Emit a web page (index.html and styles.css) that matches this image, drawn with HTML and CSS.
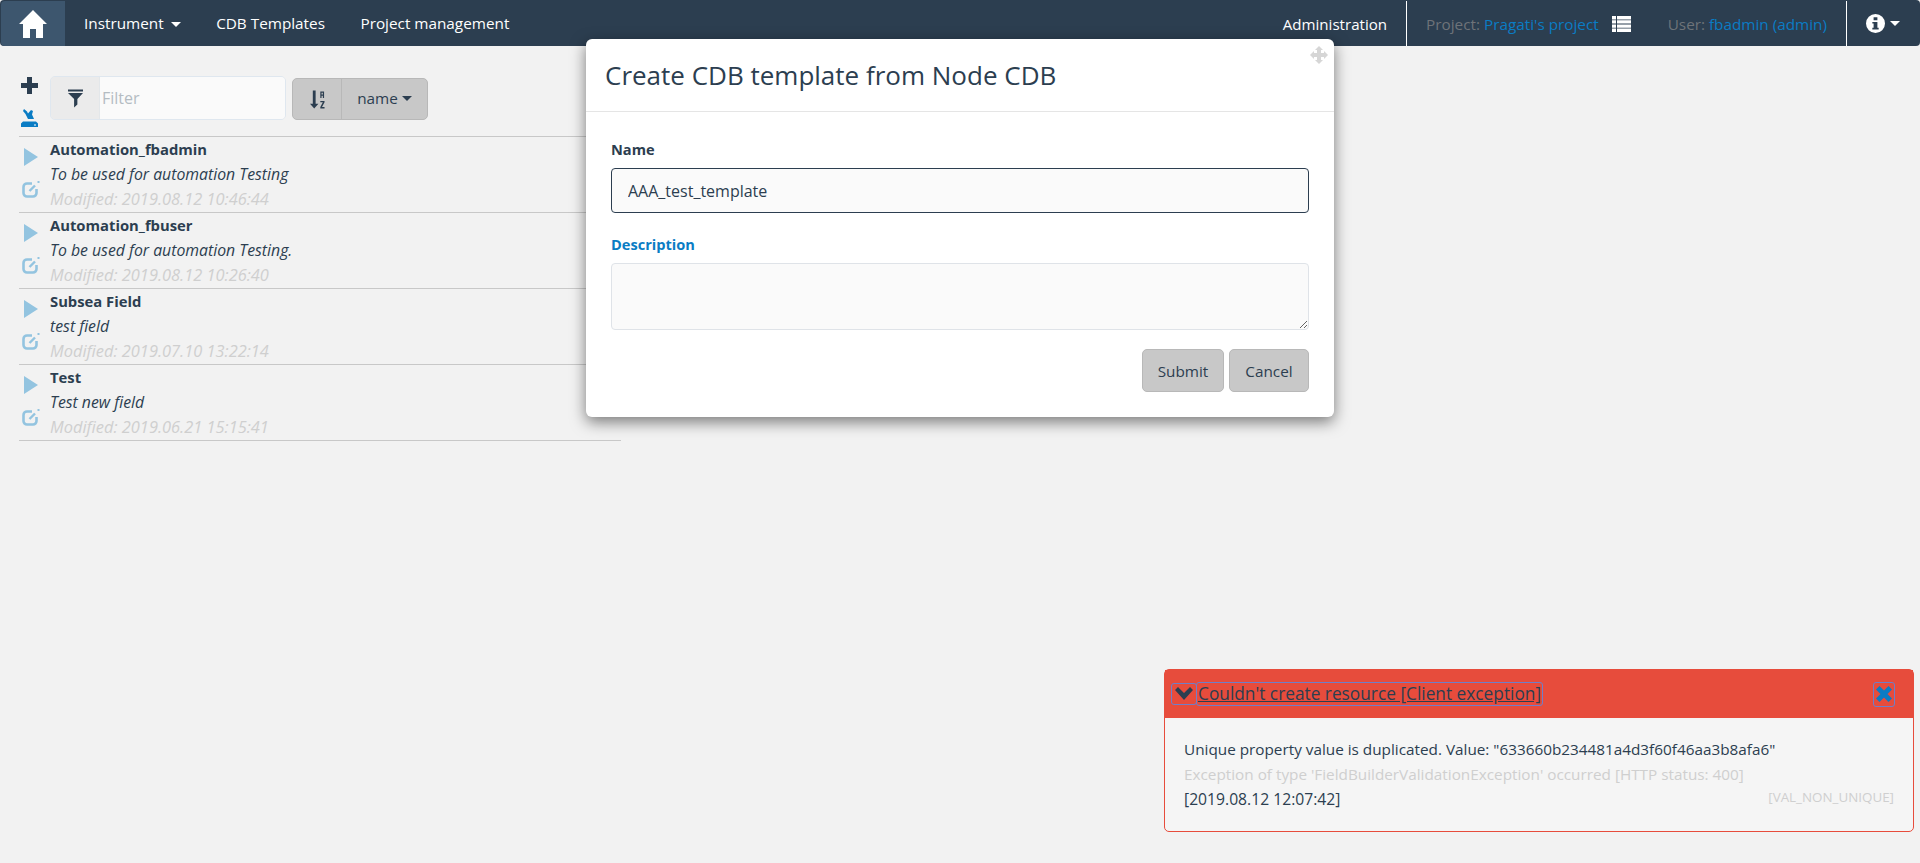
FILE: index.html
```html
<!DOCTYPE html>
<html lang="en">
<head>
<meta charset="utf-8">
<title>CDB Templates</title>
<link rel="stylesheet" href="styles.css">
</head>
<body>
<nav class="navbar">
  <a class="home"><svg class="home-icon" viewBox="0 0 28 28"><path d="M14 0 L28 14 H24 V28 H17 V19 H11 V28 H4 V14 H0 Z"/></svg></a>
  <ul class="nav-left">
    <li>Instrument<span class="caret"></span></li>
    <li>CDB Templates</li>
    <li>Project management</li>
  </ul>
  <div class="nav-right">
    <a class="admin">Administration</a>
    <div class="ctx">
      <span class="muted">Project: </span><a class="link">Pragati's project</a>
      <svg class="list-icon" viewBox="0 0 19 16"><path d="M0 0h4v3.400H0zM5 0h14v3.400H5zM0 4.200h4v3.400H0zM5 4.200h14v3.400H5zM0 8.400h4v3.400H0zM5 8.400h14v3.400H5zM0 12.600h4V16H0zM5 12.600h14V16H5z"/></svg>
      <span class="muted user">User: </span><a class="link">fbadmin (admin)</a>
    </div>
    <div class="info">
      <svg class="info-icon" viewBox="0 0 18 18"><path fill-rule="evenodd" d="M9 0a9 9 0 1 1 0 18A9 9 0 0 1 9 0zM7.200 3v3h3.600V3zM6 7.500V9h1.200v4H6v1.700h6V13h-1.200V7.500z"/></svg><span class="caret"></span>
    </div>
  </div>
</nav>

<main class="panel">
  <div class="toolbar">
    <div class="tools">
      <svg class="plus" viewBox="0 0 17 17"><path d="M6 0h5v6h6v5h-6v6H6v-6H0V6h6z"/></svg>
      <svg class="import" viewBox="0 0 17 18"><path d="M3 0l3 2.500 1 2 3-3.500 2 1-1 3.500 2 4.500H7L4.500 5 2 2zM2 12.500h13l2 2V18H0v-3.500z"/><path class="import-dot" d="M13 15.500h2v1h-2z"/></svg>
    </div>
    <div class="filter">
      <span class="addon"><svg class="funnel" viewBox="0 0 16 19"><path d="M0 0h16v2H0zM0 3.500h16L10 10v6l-3.500 3v-9z"/></svg></span>
      <input class="filter-input" type="text" placeholder="Filter">
    </div>
    <div class="sort">
      <span class="sort-dir"><svg class="sort-icon" viewBox="0 0 16 19"><path d="M3 0h3v14h3l-4.500 5L0 14h3z"/><path d="M11 1h4v7h-1.300V5.500h-1.400V8H11zM12.300 2.200v2h1.400v-2zM11 11h4.500v1.500L12.800 17.500h2.700V19H11v-1.500l2.700-5H11z"/></svg></span>
      <span class="sort-field">name<span class="caret dark"></span></span>
    </div>
  </div>

  <ul class="rows">
    <li class="row">
      <div class="row-icons">
        <svg class="play" viewBox="0 0 14 18"><path d="M0 0l14 9L0 18z"/></svg>
        <svg class="edit" viewBox="0 0 18 17"><path class="edit-frame" d="M10 2.500H5a3.500 3.500 0 0 0-3.500 3.500v6A3.500 3.500 0 0 0 5 15.500h6a3.500 3.500 0 0 0 3.500-3.500V8"/><path class="edit-pen" d="M7.500 10L13 4.500"/><path class="edit-tip" d="M15.500 0h2v2h-2z"/></svg>
      </div>
      <div class="row-text">
        <div class="row-name">Automation_fbadmin</div>
        <div class="row-desc">To be used for automation Testing</div>
        <div class="row-mod">Modified: 2019.08.12 10:46:44</div>
      </div>
    </li>
    <li class="row">
      <div class="row-icons">
        <svg class="play" viewBox="0 0 14 18"><path d="M0 0l14 9L0 18z"/></svg>
        <svg class="edit" viewBox="0 0 18 17"><path class="edit-frame" d="M10 2.500H5a3.500 3.500 0 0 0-3.500 3.500v6A3.500 3.500 0 0 0 5 15.500h6a3.500 3.500 0 0 0 3.500-3.500V8"/><path class="edit-pen" d="M7.500 10L13 4.500"/><path class="edit-tip" d="M15.500 0h2v2h-2z"/></svg>
      </div>
      <div class="row-text">
        <div class="row-name">Automation_fbuser</div>
        <div class="row-desc">To be used for automation Testing.</div>
        <div class="row-mod">Modified: 2019.08.12 10:26:40</div>
      </div>
    </li>
    <li class="row">
      <div class="row-icons">
        <svg class="play" viewBox="0 0 14 18"><path d="M0 0l14 9L0 18z"/></svg>
        <svg class="edit" viewBox="0 0 18 17"><path class="edit-frame" d="M10 2.500H5a3.500 3.500 0 0 0-3.500 3.500v6A3.500 3.500 0 0 0 5 15.500h6a3.500 3.500 0 0 0 3.500-3.500V8"/><path class="edit-pen" d="M7.500 10L13 4.500"/><path class="edit-tip" d="M15.500 0h2v2h-2z"/></svg>
      </div>
      <div class="row-text">
        <div class="row-name">Subsea Field</div>
        <div class="row-desc">test field</div>
        <div class="row-mod">Modified: 2019.07.10 13:22:14</div>
      </div>
    </li>
    <li class="row">
      <div class="row-icons">
        <svg class="play" viewBox="0 0 14 18"><path d="M0 0l14 9L0 18z"/></svg>
        <svg class="edit" viewBox="0 0 18 17"><path class="edit-frame" d="M10 2.500H5a3.500 3.500 0 0 0-3.500 3.500v6A3.500 3.500 0 0 0 5 15.500h6a3.500 3.500 0 0 0 3.500-3.500V8"/><path class="edit-pen" d="M7.500 10L13 4.500"/><path class="edit-tip" d="M15.500 0h2v2h-2z"/></svg>
      </div>
      <div class="row-text">
        <div class="row-name">Test</div>
        <div class="row-desc">Test new field</div>
        <div class="row-mod">Modified: 2019.06.21 15:15:41</div>
      </div>
    </li>
  </ul>
</main>

<section class="modal">
  <svg class="move" viewBox="0 0 18 18"><path d="M9 0l4 4h-2v3h3V5l4 4-4 4v-2h-3v3h2l-4 4-4-4h2v-3H4v2L0 9l4-4v2h3V4H5z"/></svg>
  <header class="modal-head"><h2 class="modal-title">Create CDB template from Node CDB</h2></header>
  <form class="modal-body">
    <label class="field-label">Name</label>
    <input class="field-input" type="text" value="AAA_test_template">
    <label class="field-label blue">Description</label>
    <textarea class="field-area"></textarea>
    <div class="actions">
      <button class="btn submit" type="button">Submit</button>
      <button class="btn cancel" type="button">Cancel</button>
    </div>
  </form>
</section>

<aside class="toast">
  <div class="toast-head">
    <a class="toast-chev"><svg class="chev" viewBox="0 0 18 14"><path d="M3 0l6 6 6-6 3 3-9 10L0 3z"/></svg></a>
    <a class="toast-title">Couldn't create resource [Client exception]</a>
    <a class="toast-close"><svg class="close" viewBox="0 0 16 16"><path d="M3.500 0L8 4.500 12.500 0 16 3.500 11.500 8 16 12.500 12.500 16 8 11.500 3.500 16 0 12.500 4.500 8 0 3.500z"/></svg></a>
  </div>
  <div class="toast-body">
    <div>Unique property value is duplicated. Value: "633660b234481a4d3f60f46aa3b8afa6"</div>
    <div class="faint">Exception of type 'FieldBuilderValidationException' occurred [HTTP status: 400]</div>
    <div class="toast-foot"><span class="stamp">[2019.08.12 12:07:42]</span><span class="code">[VAL_NON_UNIQUE]</span></div>
  </div>
</aside>
</body>
</html>
```

FILE: styles.css
```css
* { box-sizing: border-box; }
html, body { height: 100%; }
body {
  margin: 0;
  background: #f2f2f2;
  color: #2c3e50;
  font-family: "Open Sans", "Noto Sans", sans-serif;
  font-size: 15.300px;
  line-height: 20px;
  overflow: hidden;
}
ul { list-style: none; margin: 0; padding: 0; }

.navbar {
  display: flex;
  align-items: stretch;
  height: 46px;
  background: #2c3e50;
  border-radius: 4px;
  color: #fff;
}
.home {
  display: flex;
  align-items: center;
  justify-content: center;
  width: 64px;
  margin: 1px 0 0 1px;
  background: #3d566e;
  border-radius: 4px 0 0 4px;
}
.home-icon { width: 28px; height: 28px; fill: #fff; }
.nav-left { display: flex; align-items: center; gap: 35.500px; margin-left: 19px; }
.caret {
  display: inline-block;
  width: 0;
  height: 0;
  margin-left: 7px;
  vertical-align: middle;
  border-top: 5px solid #fff;
  border-left: 5px solid transparent;
  border-right: 5px solid transparent;
}
.caret.dark { border-top-color: #2c3e50; margin-left: 4px; }
.nav-right { display: flex; align-items: center; margin-left: auto; height: 45px; margin-top: 1px; }
.admin { padding-right: 19px; font-size: 15.100px; }
.ctx {
  display: flex;
  align-items: center;
  height: 100%;
  padding: 0 19px;
  border-left: 1px solid #fff;
  border-right: 1px solid #fff;
  white-space: pre;
}
.muted { color: #6e7379; }
.link { color: #0a7cc4; }
.list-icon { width: 19px; height: 16px; margin-left: 13px; fill: #fff; }
.user { margin-left: 37px; }
.info { display: flex; align-items: center; padding: 0 20px 0 19px; }
.info-icon { width: 19px; height: 19px; fill: #fff; }
.info .caret { margin-left: 5px; }

.panel { width: 621px; padding: 30px 0 0 19px; }
.toolbar { display: flex; align-items: flex-start; height: 60px; }
.tools { display: flex; flex-direction: column; align-items: flex-start; width: 31px; padding: 1px 0 0 2px; }
.plus { width: 17px; height: 17px; fill: #2c3e50; }
.import { width: 17px; height: 18px; margin-top: 15px; fill: #0a7cc4; }
.import-dot { fill: #fff; }
.filter {
  display: flex;
  width: 236px;
  height: 44px;
  border: 1px solid #dfe7ef;
  border-radius: 5px;
  overflow: hidden;
}
.addon {
  display: flex;
  align-items: center;
  justify-content: center;
  width: 49px;
  background: #ebebeb;
  border-right: 1px solid #e3e7ea;
}
.funnel { width: 15px; height: 19px; fill: #2c3e50; }
.filter-input {
  flex: 1;
  min-width: 0;
  padding: 0 2px;
  border: 0;
  background: #fafafa;
  font: inherit;
  font-size: 16px;
  color: #2c3e50;
}
.filter-input::placeholder { color: #b4bcc2; opacity: 1; }
.sort {
  display: flex;
  width: 136px;
  height: 42px;
  margin: 2px 0 0 6px;
  background: #c8c8c8;
  border: 1px solid #b8b8b8;
  border-radius: 5px;
}
.sort-dir {
  display: flex;
  align-items: center;
  justify-content: center;
  width: 49px;
  border-right: 1px solid #b8b8b8;
}
.sort-icon { width: 15px; height: 19px; fill: #2c3e50; }
.sort-field { display: flex; align-items: center; justify-content: center; flex: 1; padding-bottom: 2px; }

.rows { border-top: 1px solid #c8c8c8; }
.row {
  display: flex;
  height: 76px;
  border-bottom: 1px solid #c8c8c8;
}
.row-icons { display: flex; flex-direction: column; width: 31px; padding: 11px 0 0 5px; }
.play { width: 14px; height: 18px; fill: #93c4e0; }
.edit { width: 18px; height: 17px; margin: 15px 0 0 -2px; }
.edit-frame, .edit-pen { fill: none; stroke: #93c4e0; stroke-width: 2.600; }
.edit-pen { stroke-width: 2.400; }
.edit-tip { fill: #93c4e0; }
.row-text { line-height: 24.500px; }
.row-name { font-size: 14.800px; font-weight: 700; }
.row-desc { font-size: 15.800px; font-style: italic; }
.row-mod { margin-top: 1px; font-size: 16.400px; font-style: italic; color: #cfcfcf; }

.modal {
  position: absolute;
  top: 39px;
  left: 586px;
  width: 748px;
  height: 378px;
  background: #fff;
  border-radius: 6px;
  box-shadow: 0 5px 15px rgba(0, 0, 0, .5);
}
.move { position: absolute; top: 7px; right: 6px; width: 18px; height: 18px; fill: #d6d6d6; }
.modal-head { height: 73px; padding: 0 19px; border-bottom: 1px solid #e5e5e5; display: flex; align-items: center; }
.modal-title { margin: 0; font-size: 26px; font-weight: 400; line-height: 30px; }
.modal-body { display: flex; flex-direction: column; padding: 27px 25px 0; }
.field-label { font-size: 14.600px; font-weight: 700; line-height: 20px; margin-bottom: 9px; }
.field-label.blue { color: #0a7cc4; }
.field-input {
  height: 45px;
  padding: 0 16px;
  margin-bottom: 21px;
  background: #fafafa;
  border: 1px solid #2c3e50;
  border-radius: 4px;
  font: inherit;
  font-size: 16px;
  color: #2c3e50;
}
.field-area {
  display: block;
  height: 67px;
  padding: 8px 15px;
  background: #fafafa;
  border: 1px solid #dfe3e8;
  border-radius: 4px;
  font: inherit;
}
.actions { display: flex; justify-content: flex-end; gap: 5px; margin-top: 19px; }
.btn {
  height: 43px;
  padding: 0;
  background: #c8c8c8;
  border: 1px solid #b8b8b8;
  border-radius: 5px;
  font: inherit;
  color: #2c3e50;
}
.submit { width: 82px; }
.cancel { width: 80px; }

.toast {
  position: absolute;
  top: 669px;
  left: 1164px;
  width: 750px;
  height: 163px;
  background: #f5f5f5;
  border: 1px solid #e74c3c;
  border-radius: 5px;
}
.toast-head {
  display: flex;
  align-items: center;
  height: 48px;
  padding: 0 18px 0 6px;
  background: #e74c3c;
}
.toast-chev {
  display: flex;
  align-items: center;
  justify-content: center;
  width: 26px;
  height: 22px;
  border: 1.500px solid #6f7fc9;
  border-radius: 3px;
  margin-right: -1px;
}
.chev { width: 18px; height: 14px; fill: #2c3e50; }
.toast-title {
  font-size: 17.300px;
  line-height: 22px;
  padding: 0 1px;
  text-decoration: underline;
  border: 1.500px solid #6f7fc9;
  border-radius: 3px;
}
.toast-close {
  display: flex;
  align-items: center;
  justify-content: center;
  width: 22px;
  height: 25px;
  margin-left: auto;
  border: 1.500px solid #6f7fc9;
  border-radius: 3px;
}
.close { width: 16px; height: 16px; fill: #0a7cc4; }
.toast-body { padding: 19px 19px 0; line-height: 25px; }
.faint { color: #cfcfcf; }
.toast-foot { display: flex; justify-content: space-between; }
.stamp { font-size: 15.700px; }
.code { color: #cfcfcf; font-size: 13.400px; line-height: 20px; }
```
